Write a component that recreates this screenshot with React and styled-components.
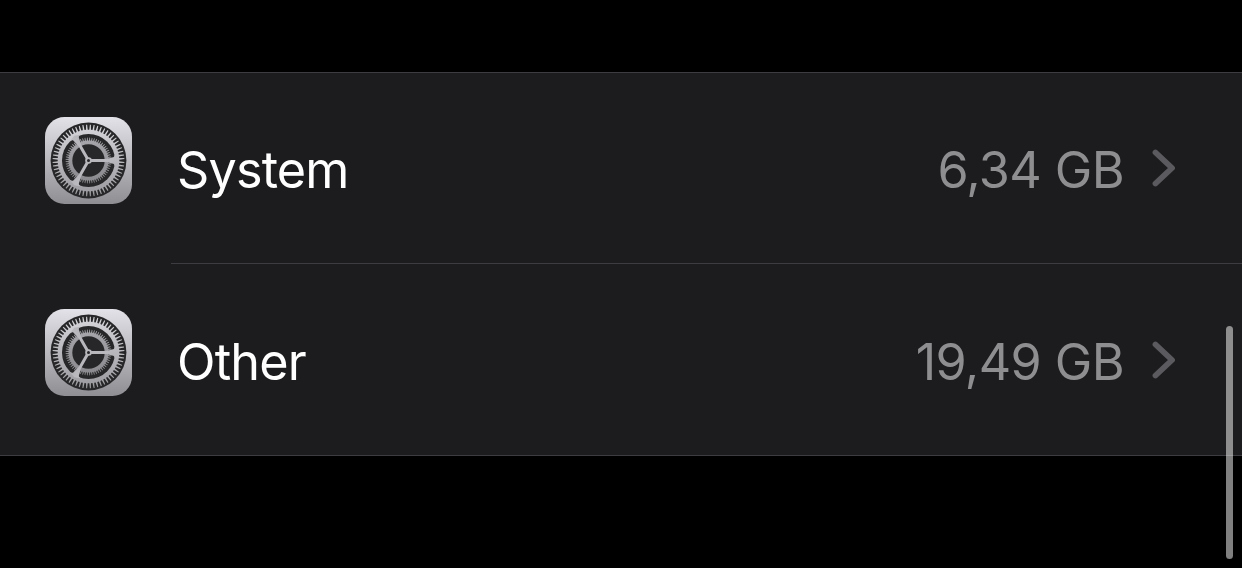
import React from "react";
import styled, { createGlobalStyle } from "styled-components";

const items = [
  { id: "system", title: "System", size: "6,34 GB" },
  { id: "other", title: "Other", size: "19,49 GB" },
];

const spokes = [0, 120, 240];

// closed outline of tapered teeth running round the icon's centre
const gearPath = (count, root, tip, rootWidth, tipWidth) => {
  const point = (radius, angle) =>
    `${(43.5 + radius * Math.cos(angle)).toFixed(2)} ${(
      43.5 +
      radius * Math.sin(angle)
    ).toFixed(2)}`;
  const points = [];
  for (let i = 0; i < count; i++) {
    const angle = ((i + 0.5) * 2 * Math.PI) / count;
    points.push(
      point(root, angle - rootWidth / root / 2),
      point(tip, angle - tipWidth / tip / 2),
      point(tip, angle + tipWidth / tip / 2),
      point(root, angle + rootWidth / root / 2)
    );
  }
  return `M${points.join("L")}Z`;
};

const outerGear = gearPath(60, 30.8, 35.9, 1.7, 1);
const innerGear = gearPath(60, 20, 22.9, 1.2, 0.7);

const SettingsIcon = ({ id }) => (
  <Icon viewBox="0 0 87 87" aria-hidden="true">
    <defs>
      <linearGradient id={`${id}-tile`} x1="0" y1="0" x2="0" y2="1">
        <stop offset="0" stopColor="#e3e2e8" />
        <stop offset="1" stopColor="#8e8e93" />
      </linearGradient>
      <linearGradient
        id={`${id}-gear`}
        gradientUnits="userSpaceOnUse"
        x1="0"
        y1="0"
        x2="0"
        y2="87"
      >
        <stop offset="0" stopColor="#dddce1" />
        <stop offset="1" stopColor="#949498" />
      </linearGradient>
    </defs>
    <rect width="87" height="87" rx="19.5" fill={`url(#${id}-tile)`} />
    <circle cx="43.5" cy="43.5" r="37.9" fill="#272729" />
    <g fill={`url(#${id}-gear)`}>
      <path d={outerGear} />
      <circle cx="43.5" cy="43.5" r="26.5" fill="#272729" />
      <path d={innerGear} opacity="0.78" />
      <circle cx="43.5" cy="43.5" r="16.2" fill="#272729" />
      {spokes.map((angle) => (
        <path
          key={angle}
          transform={`rotate(${angle} 43.5 43.5)`}
          d="M43.5 42H61C64 41.700 65 40.700 67 40.600C69 40.500 69.500 39.500 69.700 37.500L72 43.500L69.700 49.500C69.500 47.500 69 46.500 67 46.400C65 46.300 64 45.300 61 45H43.500Z"
        />
      ))}
      <circle cx="43.5" cy="43.5" r="3.3" />
    </g>
    <circle cx="43.5" cy="43.5" r="1.5" fill="#272729" />
  </Icon>
);

const StorageRow = ({ id, title, size }) => (
  <Row>
    <SettingsIcon id={id} />
    <Body>
      <Title>{title}</Title>
      <Size>{size}</Size>
      <Chevron viewBox="0 0 24 38" aria-hidden="true">
        <path d="M3.500 3.500L20 19L3.500 34.500" />
      </Chevron>
    </Body>
  </Row>
);

const App = () => (
  <Screen>
    <GlobalStyle />
    <List>
      {items.map((item) => (
        <StorageRow key={item.id} {...item} />
      ))}
    </List>
    <ScrollThumb />
  </Screen>
);

const GlobalStyle = createGlobalStyle`
  body {
    margin: 0;
    background: #000;
  }
`;

const Screen = styled.main`
  position: relative;
  box-sizing: border-box;
  height: 568px;
  padding-top: 72px;
  overflow: hidden;
  background: #000;
  font-family: Inter, "Liberation Sans", sans-serif;
`;

const List = styled.ul`
  margin: 0;
  padding: 0;
  list-style: none;
  background: #1c1c1e;
  box-shadow: inset 0 1px #3d3d41, inset 0 -1px #3d3d41;
`;

const Row = styled.li`
  display: flex;
  height: 192px;
  padding-left: 45px;
`;

const Icon = styled.svg`
  flex: none;
  width: 87px;
  height: 87px;
  margin: 45px 39px 0 0;
`;

const Body = styled.div`
  display: flex;
  flex: 1;
  align-items: center;
  box-sizing: border-box;
  padding: 2px 65px 0 6px;
  border-bottom: 1px solid #3d3d41;
  font-size: 50.3px;
  line-height: 60px;
  white-space: nowrap;
`;

const Title = styled.span`
  flex: 1;
  padding-top: 2px;
  color: #fff;
  letter-spacing: -0.8px;
`;

const Size = styled.span`
  padding-top: 2px;
  color: #8e8e90;
  letter-spacing: -0.6px;
`;

const Chevron = styled.svg`
  width: 24px;
  height: 38px;
  margin: 0 1px 2px 28px;
  fill: none;
  stroke: #5b5b5f;
  stroke-width: 5.8;
  stroke-linecap: round;
  stroke-linejoin: round;
`;

const ScrollThumb = styled.div`
  position: absolute;
  top: 326px;
  right: 9px;
  width: 7px;
  height: 233px;
  border-radius: 4px;
  background: rgba(255, 255, 255, 0.5);
`;

export default App;
